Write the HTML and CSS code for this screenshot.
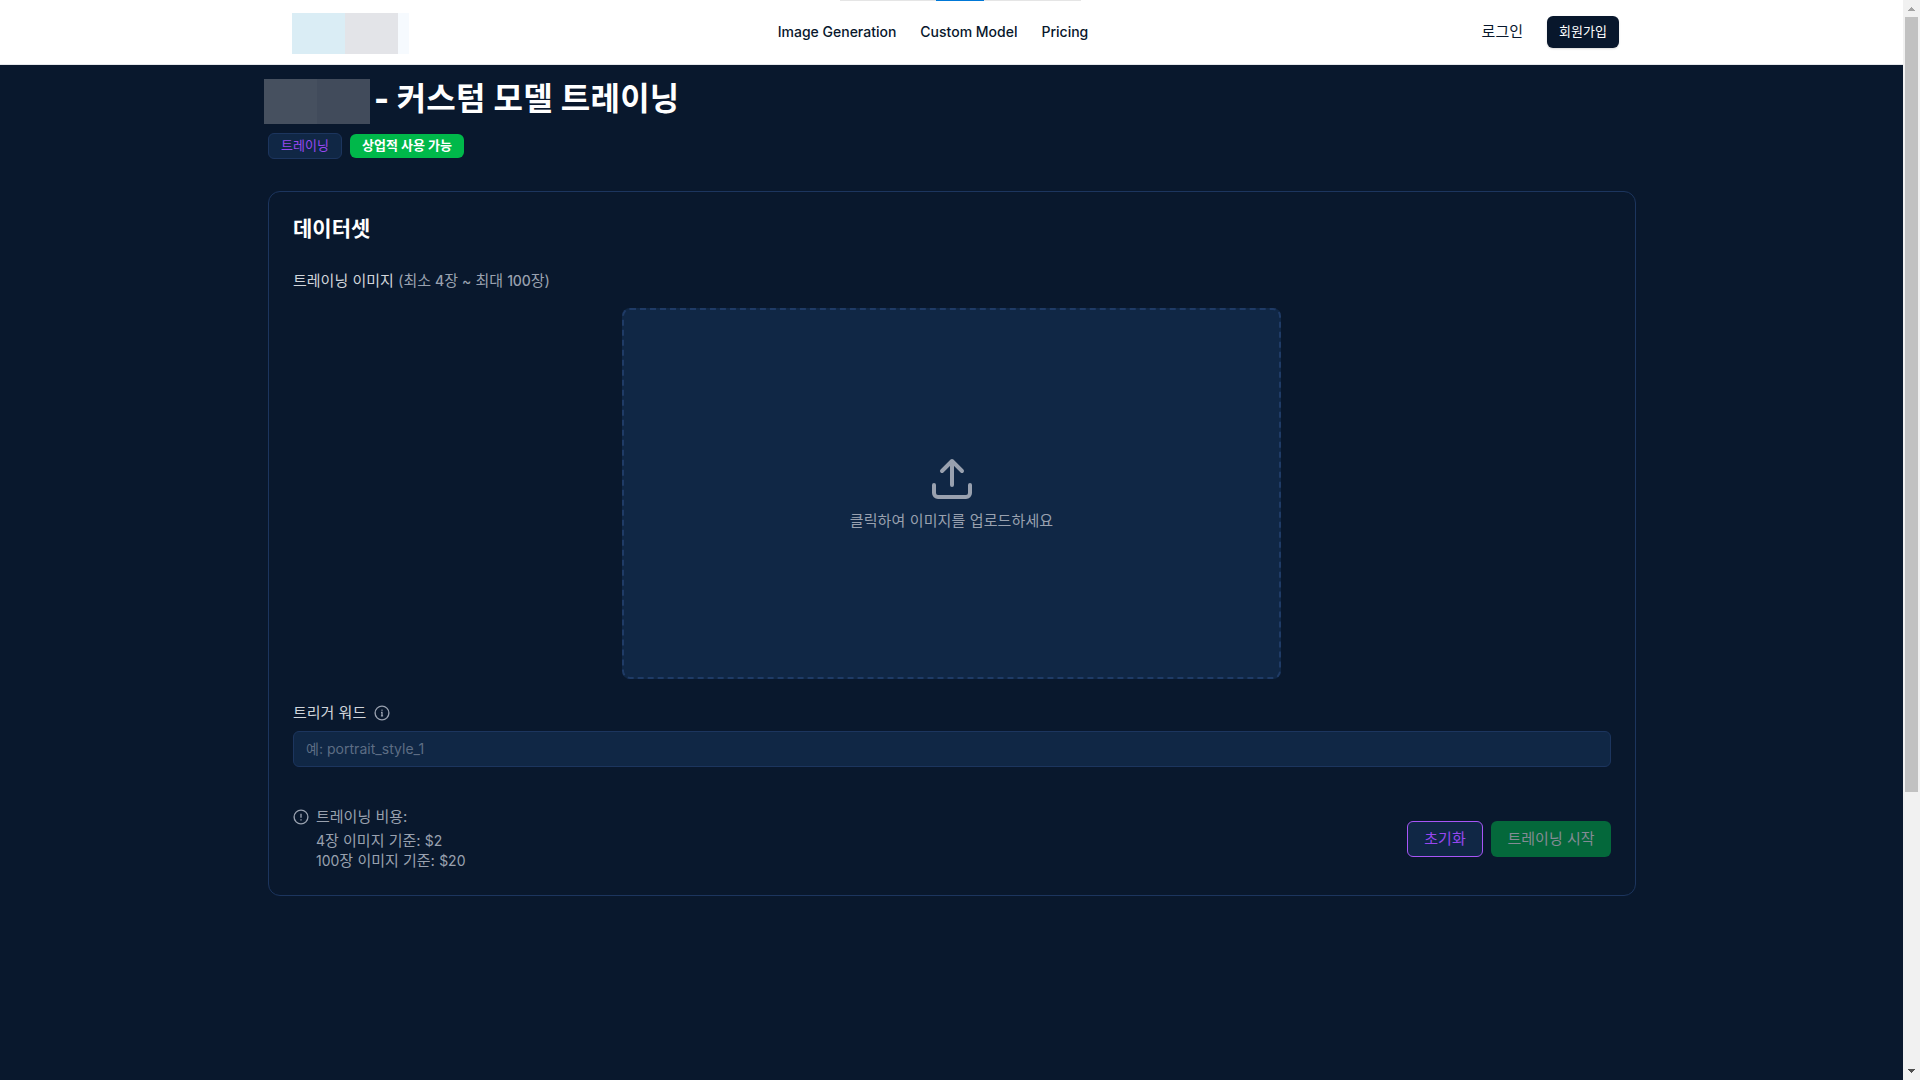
FILE: index.html
```html
<!DOCTYPE html>
<html lang="ko">
<head>
<meta charset="utf-8">
<title>커스텀 모델 트레이닝</title>
<link rel="stylesheet" href="styles.css">
</head>
<body>
<div class="window">
  <div class="page">
    <header class="header">
      <div class="progress"><span class="progress-bar"></span></div>
      <div class="logo"><i class="logo-a"></i><i class="logo-b"></i><i class="logo-c"></i></div>
      <nav class="nav"><a>Image Generation</a><a>Custom Model</a><a>Pricing</a></nav>
      <div class="auth"><a class="login">로그인</a><a class="signup">회원가입</a></div>
    </header>
    <main class="main">
      <div class="title-row">
        <span class="mask"><i></i><i></i></span>
        <h1 class="title"><span class="dash">-</span> 커스텀 모델 트레이닝</h1>
      </div>
      <div class="badges"><span class="badge badge-type">트레이닝</span><span class="badge badge-ok">상업적 사용 가능</span></div>
      <section class="card">
        <h2 class="card-title">데이터셋</h2>
        <p class="label images-label">트레이닝 이미지 <span class="muted">(최소 <b>4</b>장 <b>~</b> 최대 <b>100</b>장)</span></p>
        <div class="dropzone">
          <svg class="upload" viewBox="0 0 24 24"><path d="M21 15v4a2 2 0 0 1-2 2H5a2 2 0 0 1-2-2v-4M12 15V3M7 8l5-5 5 5"/></svg>
          <span class="drop-text">클릭하여 이미지를 업로드하세요</span>
        </div>
        <div class="label trigger-label"><span>트리거 워드</span>
          <svg class="icon" viewBox="0 0 16 16"><circle cx="8" cy="8" r="6.900"/><path d="M7 7.400h1v3.300M6.900 10.800h2.200M7.500 5.200h1"/></svg>
        </div>
        <div class="input">예: portrait_style_1</div>
        <div class="footer">
          <div class="cost">
            <svg class="icon" viewBox="0 0 16 16"><circle cx="8" cy="8" r="6.900"/><path d="M8 4.800v3.900M8 10.200v1.200"/></svg>
            <div class="cost-text">
              <p class="cost-head">트레이닝 비용:</p>
              <p><b>4</b>장 이미지 기준: <b>$2</b></p>
              <p><b>100</b>장 이미지 기준: <b>$20</b></p>
            </div>
          </div>
          <div class="actions"><button class="btn reset">초기화</button><button class="btn start">트레이닝 시작</button></div>
        </div>
      </section>
    </main>
  </div>
  <div class="scrollbar">
    <svg class="arrow" viewBox="0 0 17 17"><path fill="#a3a3a3" d="M8 7h1v1h1v1h1v1h1v1H5v-1h1V9h1V8h1z"/></svg>
    <div class="thumb"></div>
    <svg class="arrow arrow-down" viewBox="0 0 17 17"><path fill="#505050" d="M5 6h7v1h-1v1h-1v1H9v1H8V9H7V8H6V7H5z"/></svg>
  </div>
</div>
</body>
</html>
```
FILE: styles.css
```css
* { box-sizing: border-box; margin: 0; padding: 0; }
body { font-family: Inter, "Noto Sans CJK KR", sans-serif; font-size: 14px; line-height: 20px; color: #fff; background: #09182d; overflow: hidden; }
i { display: block; }
.window { display: flex; height: 1080px; }
.page { flex: 1; background: #09182d; }

.header { position: relative; height: 65px; background: #fff; border-bottom: 1px solid #e5e7eb; display: grid; grid-template-columns: 1fr auto 1fr; align-items: center; padding: 0 284px 0 292px; }
.progress { position: absolute; top: 0; left: 840px; width: 241px; height: 1px; background: #e5e5e5; }
.progress-bar { display: block; width: 48px; height: 1px; margin-left: 96px; background: #0078d7; }
.logo { display: flex; height: 41px; margin-top: 3px; }
.logo-a { width: 53px; background: #daedf5; }
.logo-b { width: 53px; background: #e3e4e8; }
.logo-c { width: 11px; background: #f6fafe; }
.nav { display: flex; gap: 24px; color: #08172c; font-weight: 500; margin: 0 11px 0 -34px; }
.auth { display: flex; align-items: center; justify-content: flex-end; gap: 24px; }
.login { color: #08172c; font-size: 15px; }
.signup { display: flex; align-items: center; justify-content: center; width: 72px; height: 32px; padding-bottom: 2px; border-radius: 6px; background: #08172c; font-size: 13px; box-shadow: 0 1px 2px rgba(0, 0, 0, 0.15); }

.main { padding: 14px 267px 0 268px; }
.title-row { display: flex; margin-left: -4px; height: 45px; }
.mask { display: flex; }
.mask i { width: 53px; background: #46505f; }
.mask i + i { background: #414b5b; }
.title { font-size: 32px; line-height: 40px; font-weight: 700; margin-left: 4px; letter-spacing: 0.250px; white-space: nowrap; }
.dash { font-weight: 800; margin-right: -0.500px; }
.badges { display: flex; align-items: center; gap: 8px; height: 26px; margin-top: 9px; }
.badge { display: flex; align-items: center; justify-content: center; padding-bottom: 2px; font-size: 13px; border-radius: 6px; white-space: nowrap; }
.badge-type { width: 74px; height: 26px; border: 1px solid #1c355e; background: #102745; color: #9747f0; }
.badge-ok { width: 114px; height: 24px; background: #00b84a; font-weight: 700; }

.card { margin-top: 32px; height: 705px; border: 1px solid #1c355e; border-radius: 12px; padding: 23px 24px 24px; }
.card-title { font-size: 21px; line-height: 28px; font-weight: 700; }
.label { color: #d1d5db; font-size: 15px; }
.label b, .cost b { font-size: 14px; font-weight: 500; }
.cost b { font-weight: 400; }
.images-label { margin-top: 28px; }
.muted { color: #99a1af; letter-spacing: -0.070px; }
.dropzone { width: 659px; height: 371px; margin: 17px 0 0 329px; display: flex; flex-direction: column; align-items: center; justify-content: center; border: 2px dashed #1f3b66; border-radius: 8px; background: #102745; color: #99a1af; padding-bottom: 1px; }
.upload { width: 48px; height: 48px; fill: none; stroke: #99a1af; stroke-width: 2; stroke-linecap: round; stroke-linejoin: round; }
.drop-text { margin-top: 8px; font-size: 15px; letter-spacing: 0.120px; }
.trigger-label { display: flex; align-items: center; gap: 8px; margin-top: 24px; }
.icon { width: 16px; height: 16px; fill: none; stroke: #99a1af; stroke-width: 1.350; }
.input { height: 36px; margin-top: 8px; padding: 7px 12px; border: 1px solid #1c355e; border-radius: 6px; background: #102745; color: #5d6d84; letter-spacing: 0.030px; }
.footer { display: flex; justify-content: space-between; align-items: center; margin-top: 40px; }
.cost { display: flex; gap: 7px; color: #99a1af; font-size: 15px; }
.cost .icon { margin-top: 2px; }
.cost-head { margin-bottom: 4px; }
.actions { display: flex; gap: 8px; }
.btn { height: 36px; border-radius: 6px; border: 0; font: inherit; font-size: 15px; white-space: nowrap; }
.reset { width: 76px; border: 1px solid #a855f7; background: #102745; color: #9747f0; }
.start { width: 120px; background: #04683b; color: #848b95; }

.scrollbar { width: 17px; background: #f1f1f1; display: flex; flex-direction: column; }
.arrow { width: 17px; height: 17px; shape-rendering: crispEdges; }
.thumb { width: 13px; height: 775px; margin-left: 2px; background: #c1c1c1; }
.arrow-down { margin-top: auto; }
```
